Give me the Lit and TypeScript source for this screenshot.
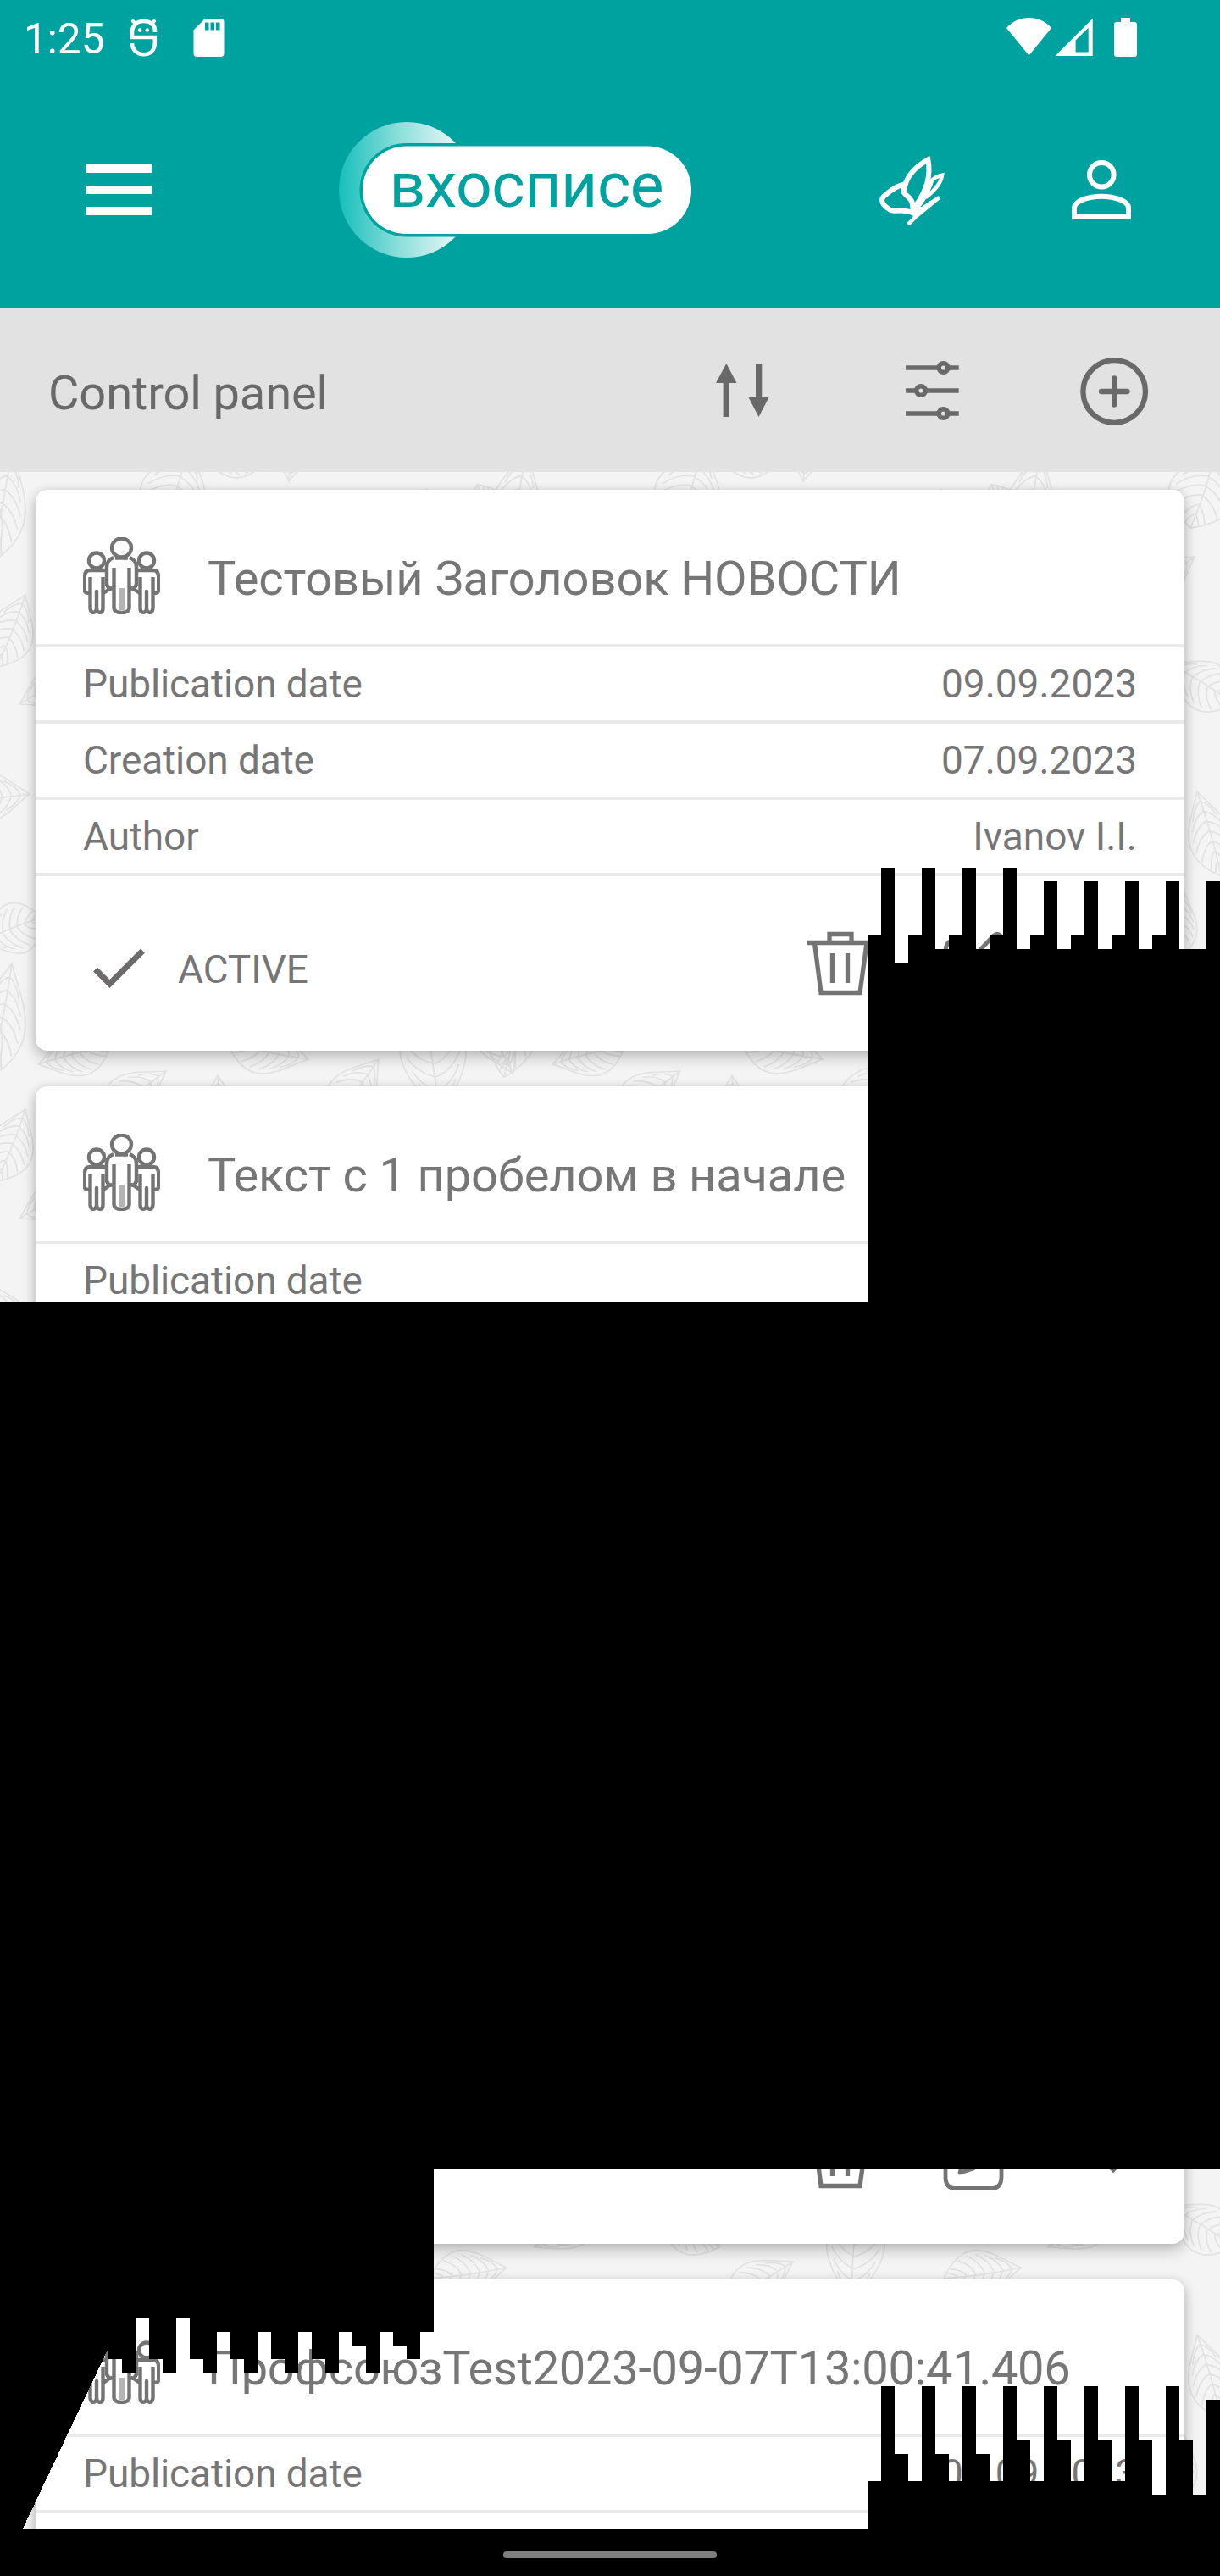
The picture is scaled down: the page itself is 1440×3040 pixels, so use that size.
import { LitElement, html, svg, css, nothing } from "lit";
import type { TemplateResult } from "lit";
import { customElement, property } from "lit/decorators.js";

type Art = TemplateResult | TemplateResult[];

/** Icon whose drawing units are page pixels: x/y/w/h is the slice it shows. */
const icon = (x: number, y: number, w: number, h: number, art: Art) => html`
  <svg width=${w} height=${h} viewBox="${x} ${y} ${w} ${h}" fill="none" aria-hidden="true">${art}</svg>
`;

/* ---------- leaf wallpaper ---------- */

const TILE = 607;

// tip x, tip y, direction of the body in degrees, length, width
const LEAVES: number[][] = [
  [45, 42, -14, 88, 56],
  [196, 50, 146, 95, 56],
  [257, 55, 88, 85, 50],
  [364, 36, 192, 98, 62],
  [447, 36, 128, 95, 60],
  [522, 104, -98, 135, 84],
  [606, 53, -116, 98, 58],
  [222, 528, 108, 100, 84],
  [14, 530, 101, 137, 66],
  [232, 536, 8, 80, 46],
  [341, 568, -82, 80, 52],
  [30, 95, 112, 92, 62],
  [23, 224, -28, 88, 52],
  [35, 330, 176, 92, 66],
  [-22, 505, -22, 78, 66],
  [166, 176, 32, 90, 64],
  [329, 241, 150, 92, 56],
  [398, 292, -86, 122, 74],
  [598, 248, 172, 92, 60],
  [184, 446, 96, 78, 42],
  [199, 327, 74, 104, 56],
  [90, 340, 40, 90, 54],
  [300, 430, -60, 92, 56],
  [470, 420, 20, 92, 56],
  [110, 470, 60, 80, 50],
];

const leaf = ([tx, ty, angle, len, width]: number[], dx: number, dy: number) => {
  const h = width * 0.72;
  let veins = "";
  for (let i = 1; i < 8; i++) {
    const s = (i / 8.5) * len;
    const e = Math.min(len * 0.95, s + len * 0.2);
    const t = e / len;
    const y = 3 * h * t * (1 - t) * (0.35 + 0.65 * t);
    veins += `M${s} 0Q${s + len * 0.04} ${y * 0.6} ${e} ${y}M${s} 0Q${s + len * 0.04} ${-y * 0.6} ${e} ${-y}`;
  }
  return svg`<g transform="translate(${tx + dx} ${ty + dy}) rotate(${angle})">
    <path d="M0 0C${len * 0.28} ${-h * 0.35} ${len * 0.62} ${-h * 1.25} ${len} 0C${len * 0.62} ${h * 1.25} ${len * 0.28} ${h * 0.35} 0 0ZM0 0Q${len * 0.5} ${-h * 0.08} ${len} 0" />
    <path d=${veins} />
  </g>`;
};

const wallpaper = () => html`
  <svg class="wallpaper" width="1440" height="3040" aria-hidden="true">
    <defs>
      <pattern id="leaves" width=${TILE} height=${TILE} patternUnits="userSpaceOnUse">
        <g fill="none" stroke="#e2e2e2" stroke-width="1.700">
          ${LEAVES.map((l) => [-TILE, 0, TILE].map((dx) => [-TILE, 0, TILE].map((dy) => leaf(l, dx, dy))))}
        </g>
      </pattern>
    </defs>
    <rect width="1440" height="3040" fill="url(#leaves)" />
  </svg>
`;

/* ---------- black overlay built of 16px columns ---------- */

const STEP = 16;
const UPPER = [
  1104, 1024, 1136, 1104, 1024, 1120, 1104, 1024, 1120, 1104, 1024, 1120, 1104,
  1040, 1120, 1104, 1040, 1120, 1104, 1040, 1120, 1104, 1040, 1120, 1120, 1040,
];
const LOWER = [
  2928, 2816, 2896, 2928, 2816, 2896, 2928, 2816, 2896, 2928, 2816, 2880, 2928,
  2816, 2880, 2928, 2816, 2880, 2928, 2816, 2880, 2944, 2816, 2880, 2944, 2832,
];
const FRINGE = [
  2784, 2800, 2736, 2784, 2800, 2736, 2784, 2800, 2752, 2784, 2800, 2752,
  2784, 2800, 2752, 2784, 2800, 2752, 2768, 2800, 2752, 2768, 2784, 2752,
];

const skyline = (x: number, tops: number[]) =>
  tops.map((y, i) => `H${x + i * STEP}V${y}H${x + (i + 1) * STEP}`).join("");

const overlay = () => html`
  <svg class="overlay" width="1440" height="3040" shape-rendering="crispEdges" aria-hidden="true">
    <path d="M1024 1536${skyline(1024, UPPER)}V1536Z" />
    <path d="M0 1536H1440V2560H0Z" />
    <path d="M128 2560${skyline(128, FRINGE)}V2560Z" />
    <path d="M0 2560H128V2771L27 2984H0Z" />
    <path d="M1024 2984${skyline(1024, LOWER)}V2984Z" />
  </svg>
`;

/* ---------- card drawings ---------- */

const people = icon(98, 634, 91, 91, svg`
  <g class="soft" transform="translate(98 634)" stroke="#747474" stroke-width="4.400" stroke-linejoin="round">
    <path stroke="#b4b4b4" stroke-width="7" d="M45.500 60V86" />
    <ellipse cx="45.500" cy="12.500" rx="11.500" ry="11" />
    <path d="M36 24C31 26 28 29 28 35V56L31 61L35 60M55 24C60 26 63 29 63 35V56L60 61L56 60M38 24.500H53" />
    <path d="M36.500 36V84Q37 89 45.500 89Q54 89 54.500 84V36" />
    <circle cx="16" cy="27.500" r="9" />
    <circle cx="75" cy="27.500" r="9" />
    <path d="M28 39H8Q1.800 39 1.800 47V63Q2 66 8 66M8.500 47V84Q9 89 12.500 89Q16 88 16 84V64V84Q16 88 19.500 89Q23.500 89 23.500 84V47M24 66L30 62" />
    <path d="M63 39H83Q89.200 39 89.200 47V63Q89 66 83 66M82.500 47V84Q82 89 78.500 89Q75 88 75 84V64V84Q75 88 71.500 89Q67.500 89 67.500 84V47M67 66L61 62" />
  </g>`);

const check = icon(98, 1034, 84, 206, svg`
  <path stroke="#6c6a6b" stroke-width="7" d="M112.500 1144L129.500 1161L168.500 1122" />`);

const trash = icon(952, 1034, 80, 206, svg`
  <g class="soft" stroke="#747474" stroke-width="5.300">
    <path d="M953 1112.500H1030M979 1112V1102.500H1005V1112" />
    <path d="M961.500 1113L969 1171.500H1015L1023 1113M982.500 1125V1160M1000.500 1125V1160" />
  </g>`);

const edit = icon(1112, 1034, 84, 206, svg`
  <g class="soft" stroke="#747474" stroke-width="4.800" stroke-linejoin="round">
    <path d="M1148 1109H1130Q1116 1109 1116 1123V1161Q1116 1174.500 1128 1174.500H1170Q1182 1174.500 1182 1161V1133" />
    <path d="M1133 1156L1137 1142L1173 1104Q1177 1100 1182 1105T1184 1116L1149 1151ZM1137 1142L1149 1151" />
  </g>`);

const chevron = icon(1290, 1034, 48, 206, svg`
  <path stroke="#6c6a6b" stroke-width="6" d="M1297 1135L1314 1152L1331 1135" />`);

interface Row { label: string; value?: string }

@customElement("news-card")
export class NewsCard extends LitElement {
  @property() heading = "";
  @property({ type: Number }) tracking = 0;
  @property({ attribute: false }) rows: Row[] = [];
  @property() status = "";
  @property({ type: Boolean }) actions = false;

  static styles = css`
    :host {
      display: flex; flex-direction: column; box-sizing: border-box;
      height: 662px; flex: none; border-radius: 14px; background: #fff;
      box-shadow: 0 8px 18px rgba(0, 0, 0, 0.2), 0 1px 12px rgba(0, 0, 0, 0.12);
      color: #767676; font-family: Roboto, "Liberation Sans", sans-serif;
    }
    svg { display: block; flex: none; }
    .soft { filter: blur(0.7px); }
    .head { display: flex; align-items: flex-start; height: 126px; padding: 56px 56px 0; border-bottom: 4px solid #eaeaea; }
    .heading { margin: 16px 0 0 56px; font-size: 56px; line-height: 66px; white-space: pre; }
    .row {
      display: flex; justify-content: space-between; height: 85px; line-height: 85px; padding: 1px 56px 0;
      border-bottom: 4px solid #eaeaea; font-size: 46px; letter-spacing: -0.1px; white-space: nowrap;
    }
    .value { letter-spacing: 0; }
    .foot { display: flex; height: 206px; padding: 0 60px 0 56px; }
    .status { flex: 1; margin-left: 28px; padding-top: 15px; font-size: 46px; line-height: 191px; letter-spacing: -0.1px; }
    .actions { display: flex; margin-left: auto; }
    .edit { margin-left: 80px; }
    .more { margin-left: 94px; }
  `;

  render() {
    return html`
      ${this.heading
        ? html`<div class="head">${people}<div class="heading" style="letter-spacing: ${this.tracking}px">${this.heading}</div></div>`
        : html`<div class="head"></div>`}
      ${[0, 1, 2].map((i) => {
        const r = this.rows[i];
        return html`<div class="row">${r
          ? html`<span>${r.label}</span>${r.value ? html`<span class="value">${r.value}</span>` : nothing}`
          : nothing}</div>`;
      })}
      <div class="foot">
        ${this.status ? html`${check}<div class="status">${this.status}</div>` : nothing}
        ${this.actions ? html`<div class="actions">${trash}<div class="edit">${edit}</div><div class="more">${chevron}</div></div>` : nothing}
      </div>
    `;
  }
}

@customElement("app-root")
export class AppRoot extends LitElement {
  static styles = css`
    :host {
      display: block; position: relative; width: 1440px; height: 3040px; overflow: hidden;
      background: #f4f4f4; font-family: Roboto, "Liberation Sans", sans-serif;
    }
    svg { display: block; flex: none; }
    .wallpaper, .overlay { position: absolute; left: 0; top: 0; }
    .page { position: relative; display: flex; flex-direction: column; height: 3040px; }
    .status { display: flex; height: 84px; background: #00a2a0; color: #fff; }
    .clock { width: 97px; margin-left: 28px; font-size: 49.5px; line-height: 93px; }
    .face { margin-left: 26px; }
    .sd { margin-left: 38px; }
    .signal { margin-left: 920px; }
    .appbar { display: flex; height: 280px; background: #00a2a0; }
    .menu { margin-left: 102px; }
    .logo { margin-left: 221px; }
    .fly { margin-left: 218px; }
    .user { margin-left: 145px; }
    .logo text { font-family: Roboto, "Liberation Sans", sans-serif; font-size: 75px; }
    .panel { display: flex; height: 193px; background: #e2e2e2; color: #696969; }
    .title { width: 786px; margin-left: 57px; padding-top: 7px; font-size: 56px; line-height: 186px; letter-spacing: -0.12px; }
    .filter { margin-left: 159px; }
    .add { margin-left: 141px; }
    .list { display: flex; flex-direction: column; gap: 42px; height: 2406px; padding: 21px 42px 0; overflow: hidden; }
    .nav { display: flex; justify-content: center; height: 29px; padding-top: 27px; background: #000; }
    .handle { width: 252px; height: 8px; border-radius: 4px; background: #7f7f7f; }
  `;

  render() {
    return html`
      ${wallpaper()}
      <div class="page">
        <div class="status">
          <div class="clock">1:25</div>
          <div class="face">${icon(151, 0, 38, 84, svg`
            <path stroke="#fff" stroke-width="4.600" d="M183 38V36C183 29 177.500 25 169.500 25C161.500 25 156 30 156 38V44H182.800V50C182.800 60 177 64.300 169.500 64.300C162 64.300 156 59 156 51" />
            <path stroke="#fff" stroke-width="4" stroke-linecap="round" d="M157 25L160.500 28.500M182 25L178.500 28.500" />
            <circle cx="165" cy="35.500" r="2.200" fill="#fff" /><circle cx="173.700" cy="35.500" r="2.200" fill="#fff" />`)}</div>
          <div class="sd">${icon(227, 0, 40, 84, svg`
            <path fill="#fff" fill-rule="evenodd" d="M242 22H260.500Q264.500 22 264.500 26V63Q264.500 67 260.500 67H232.500Q228.500 67 228.500 63V35.500ZM242 26.500V35.500H246.500V26.500ZM248.500 26.500V35.500H253V26.500ZM255 26.500V35.500H259.500V26.500Z" />`)}</div>
          <div class="signal">${icon(1187, 0, 158, 84, svg`
            <g fill="#fff">
              <path d="M1214.500 65.500L1188 33C1195 25 1204 21 1214.500 21C1225 21 1234 25 1241 33Z" />
              <path fill-rule="evenodd" d="M1245.500 66L1289.700 22V66ZM1269.600 47.500V61.500H1284.700V32.800Z" />
              <path d="M1323 21H1334V26H1339Q1342 26 1342 29V64Q1342 67 1339 67H1318Q1315 67 1315 64V29Q1315 26 1318 26H1323Z" />
            </g>`)}</div>
        </div>
        <div class="appbar">
          <div class="menu">${icon(102, 84, 77, 280, svg`
            <path fill="#fff" d="M102 194H179V204H102ZM102 219H179V229H102ZM102 244H179V254H102Z" />`)}</div>
          <div class="logo">${icon(400, 84, 418, 280, svg`
            <defs><linearGradient id="moon" gradientUnits="userSpaceOnUse" x1="400" x2="540" y1="0" y2="0">
              <stop offset="0" stop-color="#16bfbb" /><stop offset="0.500" stop-color="#8adeda" /><stop offset="1" stop-color="#e8f8f7" />
            </linearGradient></defs>
            <circle cx="480" cy="224" r="80" fill="url(#moon)" />
            <rect x="424.500" y="169" width="395" height="110.500" rx="55" fill="#00a2a0" />
            <rect x="428" y="172.500" width="388" height="103.500" rx="51.500" fill="#fff" />
            <text x="459.500" y="244" textLength="324" lengthAdjust="spacing" fill="#00a2a0">вхосписе</text>`)}</div>
          <div class="fly">${icon(1036, 84, 84, 280, svg`
            <g transform="translate(1020 160) scale(0.33333)" stroke="#fff" stroke-width="18" stroke-linejoin="miter" stroke-linecap="round">
              <path d="M144 174C118 174 92 196 73 212C60 222 61 235 70 245C82 258 95 267 108 266C135 264 156 266 176 275" />
              <path stroke-width="19" d="M144 172C136 190 137 202 148 210C164 222 173 232 173 262" />
              <path d="M143 186C150 142 186 108 226 85C236 135 228 185 184 246" />
              <path stroke-width="14" d="M240 158C251 147 262 143 276 140C273 166 256 188 222 216M240 158C236 178 226 200 196 238" />
              <path stroke-width="12" d="M262 221C242 232 222 245 200 262" />
              <path d="M160 310L186 284L262 222" stroke-width="14" />
              <path d="M168 240L188 238L236 190L226 214L200 252L214 258L172 300Q176 284 166 272Z" fill="#fff" stroke="none" />
            </g>`)}</div>
          <div class="user">${icon(1265, 84, 70, 280, svg`
            <g stroke="#fff" stroke-width="6">
              <circle cx="1300.300" cy="206.300" r="14.300" />
              <path d="M1268 256V245.500C1268 237 1285 231.700 1300 231.700C1315 231.700 1332 237 1332 245.500V256Z" />
            </g>`)}</div>
        </div>
        <div class="panel">
          <div class="title">Control panel</div>
          <div class="sort">${icon(843, 364, 67, 193, svg`
            <path fill="#696969" d="M857.300 429L869.500 452H861V492H853.600V452H845ZM892 429H899.300V469H907.500L895.500 492L883.500 469H892Z" />`)}</div>
          <div class="filter">${icon(1069, 364, 64, 193, svg`
            <g stroke="#696969" stroke-width="5.500">
              <path d="M1069 434H1131.700M1069 461H1131.700M1069 488H1131.700" />
              <g fill="#e2e2e2"><circle cx="1113.500" cy="434" r="5.300" /><circle cx="1087" cy="461" r="5.300" /><circle cx="1113.500" cy="488" r="5.300" /></g>
            </g>`)}</div>
          <div class="add">${icon(1274, 364, 84, 193, svg`
            <g stroke="#696969" stroke-width="6.300" stroke-linecap="round">
              <circle cx="1315.200" cy="462" r="36.800" />
              <path d="M1300 462H1330.500M1315.200 446.500V477.500" />
            </g>`)}</div>
        </div>
        <div class="list">
          <news-card heading="Тестовый Заголовок НОВОСТИ" tracking="-0.08" status="ACTIVE" actions .rows=${[
            { label: "Publication date", value: "09.09.2023" },
            { label: "Creation date", value: "07.09.2023" },
            { label: "Author", value: "Ivanov I.I." },
          ]}></news-card>
          <news-card heading="Текст с 1 пробелом в начале" tracking="-0.14" .rows=${[{ label: "Publication date" }]}></news-card>
          <news-card actions></news-card>
          <news-card heading="ПрофсоюзTest2023-09-07T13:00:41.406" tracking="-0.28" .rows=${[
            { label: "Publication date", value: "07.09.2023" },
          ]}></news-card>
        </div>
        <div class="nav"><div class="handle"></div></div>
      </div>
      ${overlay()}
    `;
  }
}
